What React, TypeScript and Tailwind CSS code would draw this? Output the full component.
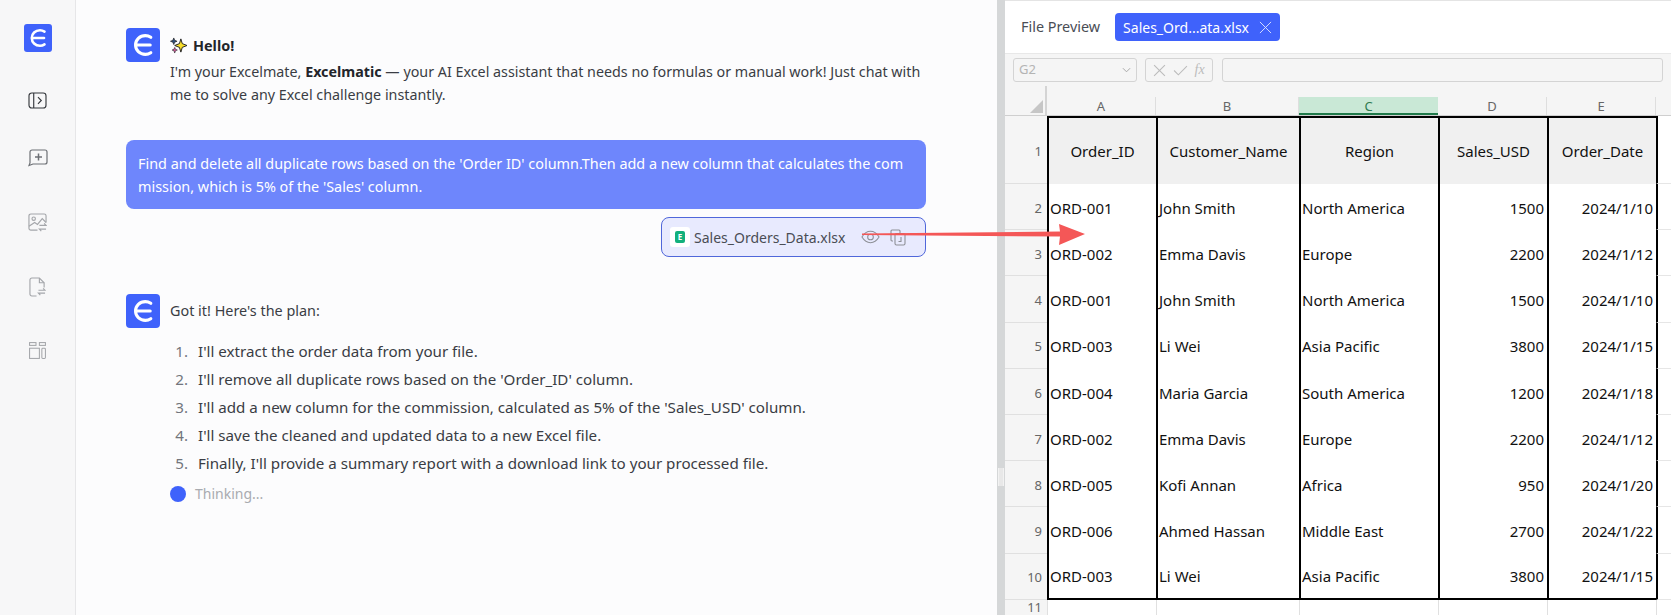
import { Fragment } from "react";

const font = "font-['Noto_Sans','Open_Sans',sans-serif]";

const steps = [
  "I'll extract the order data from your file.",
  "I'll remove all duplicate rows based on the 'Order_ID' column.",
  "I'll add a new column for the commission, calculated as 5% of the 'Sales_USD' column.",
  "I'll save the cleaned and updated data to a new Excel file.",
  "Finally, I'll provide a summary report with a download link to your processed file.",
];

const rows = [
  ["ORD-001", "John Smith", "North America", "1500", "2024/1/10"],
  ["ORD-002", "Emma Davis", "Europe", "2200", "2024/1/12"],
  ["ORD-001", "John Smith", "North America", "1500", "2024/1/10"],
  ["ORD-003", "Li Wei", "Asia Pacific", "3800", "2024/1/15"],
  ["ORD-004", "Maria Garcia", "South America", "1200", "2024/1/18"],
  ["ORD-002", "Emma Davis", "Europe", "2200", "2024/1/12"],
  ["ORD-005", "Kofi Annan", "Africa", "950", "2024/1/20"],
  ["ORD-006", "Ahmed Hassan", "Middle East", "2700", "2024/1/22"],
  ["ORD-003", "Li Wei", "Asia Pacific", "3800", "2024/1/15"],
];

const headers = ["Order_ID", "Customer_Name", "Region", "Sales_USD", "Order_Date"];

function Logo({ size }: { size: "sm" | "lg" }) {
  return (
    <div
      className={
        size === "sm"
          ? "w-7 h-7 rounded-[3px] bg-[#3f62fb] flex items-center justify-center shrink-0"
          : "w-[34px] h-[34px] rounded-[4px] bg-[#3f62fb] flex items-center justify-center shrink-0"
      }
    >
      <svg viewBox="0 0 20 20" className={size === "sm" ? "w-5 h-5" : "w-6 h-6"} fill="none" stroke="#fff" strokeWidth="2.6" strokeLinecap="round">
        <path d="M16.500 3.600C15 2.600 13.600 2.200 12 2.200 7.200 2.200 3.800 5.600 3.800 10s3.400 7.800 8.200 7.800c1.600 0 3-.4 4.500-1.400" />
        <path d="M4.500 10h11.500" />
      </svg>
    </div>
  );
}

function Sidebar() {
  return (
    <aside className="w-[76px] shrink-0 bg-[#f7f7f8] border-r border-[#e6e6e8] flex flex-col items-center pt-6 gap-10">
      <Logo size="sm" />
      <svg viewBox="0 0 20 18" className="w-[19px] h-[17px]" fill="none" stroke="#33363b" strokeWidth="1.2">
        <rect x="1" y="1" width="18" height="16" rx="3" />
        <path d="M6 1v16" />
        <path d="M10.500 5.500l3.500 3.500-3.500 3.500" />
      </svg>
      <svg viewBox="0 0 20 18" className="w-5 h-[18px]" fill="none" stroke="#6d7075" strokeWidth="1.2">
        <path d="M4 1h13a2 2 0 0 1 2 2v10a2 2 0 0 1-2 2H5l-4 1.500L2 14V3a2 2 0 0 1 2-2z" />
        <path d="M10.500 4.500v7M7 8h7" strokeWidth="1.500" />
      </svg>
      <svg viewBox="0 0 20 20" className="w-[19px] h-[19px] mt-[6px]" fill="none" stroke="#a4a6aa" strokeWidth="1.200">
        <path d="M10 18H3a2 2 0 0 1-2-2V3a2 2 0 0 1 2-2h14a2 2 0 0 1 2 2v7" />
        <circle cx="6" cy="6" r="1.800" />
        <path d="M1 14l6-4 3 2 5-6 4 4" />
        <path d="M12 13h7l-2-2M19 17h-7l2 2" />
      </svg>
      <svg viewBox="0 0 18 21" className="w-[17px] h-5 mt-[5px]" fill="none" stroke="#a4a6aa" strokeWidth="1.200">
        <path d="M8 20H3a2 2 0 0 1-2-2V3a2 2 0 0 1 2-2h8l5 5v5" />
        <path d="M11 1v5h5" />
        <path d="M10 14h7l-2-2M17 17h-7l2 2" />
      </svg>
      <svg viewBox="0 0 18 18" className="w-[17px] h-[17px] mt-[5px]" fill="none" stroke="#a4a6aa" strokeWidth="1.100">
        <rect x="0.600" y="0.600" width="6.800" height="3" />
        <rect x="11" y="0.600" width="6.400" height="3" />
        <rect x="0.600" y="6.600" width="10.400" height="10.800" />
        <rect x="13.600" y="6.600" width="3.800" height="10.800" rx="1" />
      </svg>
    </aside>
  );
}

function Chat() {
  return (
    <main className="w-[921px] shrink-0 bg-[#fcfcfd] pt-7 pl-[50px] text-[14.4px] leading-[23px] text-[#3a3d44]">
      <div className="w-[800px]">
        <div className="flex gap-[10px] h-[104px]">
          <Logo size="lg" />
          <div className="pt-[6px]">
            <div className="flex items-center gap-[6px] font-bold text-[#23252a]">
              <svg viewBox="0 0 18 18" className="w-[17px] h-[17px]">
                <path d="M11.500 2l1.500 5 5 2-5 2-1.500 5-1.500-5-5-2 5-2z" fill="#f8de2a" stroke="#1d1d20" strokeWidth="1" />
                <path d="M4 1l1 2.500L7.500 4.500 5 5.500 4 8 3 5.500.5 4.500 3 3.500z" fill="#2e4f7a" stroke="#1d1d20" strokeWidth="0.700" />
                <path d="M5 11l.8 2 2 .8-2 .8-.8 2.400-.8-2.400-2-.8 2-.8z" fill="#d6579a" stroke="#1d1d20" strokeWidth="0.600" />
              </svg>
              <span>Hello!</span>
            </div>
            <p className="mt-[3px] w-[756px] text-[14.3px]">
              I'm your Excelmate, <b className="text-[#23252a]">Excelmatic</b> — your AI Excel assistant that needs no formulas or manual work! Just chat with me to solve any Excel challenge instantly.
            </p>
          </div>
        </div>
        <div className="mt-2 h-[69px] rounded-lg bg-[#6e86fc] text-white px-3 py-3 break-all">
          Find and delete all duplicate rows based on the 'Order ID' column.Then add a new column that calculates the commission, which is 5% of the 'Sales' column.
        </div>
        <div className="flex justify-end mt-2">
          <div className="w-[265px] h-10 rounded-lg border border-[#5067da] bg-[#e8eafe] flex items-center pl-[8px] text-[14px]">
            <span className="w-5 h-5 rounded-[3px] bg-white flex items-center justify-center">
              <span className="w-[10px] h-3 rounded-[2px] bg-[#12b07c] text-white text-[8px] leading-3 font-bold text-center">E</span>
            </span>
            <span className="ml-1 text-[#4a4d55]">Sales_Orders_Data.xlsx</span>
            <svg viewBox="0 0 20 14" className="ml-[16px] w-[19px] h-[14px]" fill="none" stroke="#8d8f96" strokeWidth="1.100">
              <path d="M1 7c2.500-4 5.500-6 9-6s6.500 2 9 6c-2.500 4-5.500 6-9 6s-6.500-2-9-6z" />
              <circle cx="10" cy="7" r="3" />
            </svg>
            <svg viewBox="0 0 16 17" className="ml-[10px] w-4 h-[17px]" fill="none" stroke="#8d8f96" strokeWidth="1.100">
              <path d="M3 12H2a1 1 0 0 1-1-1V2a1 1 0 0 1 1-1h7a1 1 0 0 1 1 1v2" />
              <rect x="5" y="4.500" width="10" height="11.500" rx="1.500" />
              <path d="M11 8v4.500H8.500" />
            </svg>
          </div>
        </div>
        <div className="flex gap-[10px] mt-[37px]">
          <Logo size="lg" />
          <p className="pt-[5px] text-[14.4px]">Got it! Here's the plan:</p>
        </div>
        <ol className="mt-[12px] flex flex-col gap-[5px] text-[15.15px]">
          {steps.map((step, i) => (
            <li key={step} className="flex">
              <span className="w-[72px] pr-[10px] text-right text-[#72757c]">{i + 1}.</span>
              <span>{step}</span>
            </li>
          ))}
        </ol>
        <div className="flex items-center gap-[9px] ml-[44px] mt-[7px] text-[14px] text-[#a9abb0]">
          <span className="w-4 h-4 rounded-full bg-[#3f62fb]" />
          <span>Thinking...</span>
        </div>
      </div>
    </main>
  );
}

function Sheet() {
  const colsCls = "grid grid-cols-[42px_109px_143px_139px_109px_109px_1fr]";
  const lineCls = "border-l-2 border-black";
  return (
    <div className={`flex-1 min-w-0 bg-white flex flex-col overflow-hidden ${font}`}>
      <div className="h-[54px] border-y border-[#e8e8e8] border-t-[#e4e4e4] flex items-center pl-[16px] shrink-0">
        <span className="text-[14.4px] text-[#4a4d55]">File Preview</span>
        <div className="ml-[15px] w-[165px] h-7 rounded-[4px] bg-[#3f62fb] text-white text-[14px] flex items-center pl-2">
          Sales_Ord...ata.xlsx
          <svg viewBox="0 0 14 14" className="ml-[10px] w-[13px] h-[13px]" fill="none" stroke="#dfe5ff" strokeWidth="1">
            <path d="M1 1l12 12M13 1L1 13" />
          </svg>
        </div>
      </div>
      <div className="h-[32px] bg-[#f5f5f5] flex items-center px-2 gap-2 shrink-0">
        <div className="w-[124px] h-6 border border-[#d4d4d4] rounded-[3px] flex items-center justify-between px-[5px] text-[13px] text-[#b4b4b4]">
          G2
          <svg viewBox="0 0 10 6" className="w-[9px] h-[6px]" fill="none" stroke="#a0a0a0" strokeWidth="1"><path d="M1 1l4 4 4-4" /></svg>
        </div>
        <div className="w-[68px] h-6 border border-[#d4d4d4] rounded-[3px] flex items-center justify-around px-1">
          <svg viewBox="0 0 12 12" className="w-[13px] h-[13px]" fill="none" stroke="#bcbcbc" strokeWidth="1"><path d="M1 1l10 10M11 1L1 11" /></svg>
          <svg viewBox="0 0 14 12" className="w-[15px] h-[13px]" fill="none" stroke="#bcbcbc" strokeWidth="1"><path d="M1 6l4 4 8-8" /></svg>
          <span className="text-[14px] leading-4 italic text-[#bcbcbc] font-['Liberation_Serif',serif]">fx</span>
        </div>
        <div className="flex-1 h-6 ml-[1px] border border-[#d4d4d4] rounded-[3px]" />
      </div>
      <div className={`${colsCls} h-[30px] bg-[#f5f5f5] shrink-0 items-end text-[13px] leading-[18px] text-[#666] border-b border-[#cfcfcf]`}>
        <div className="relative h-[29px] border-r-2 border-[#d4d4d4]">
          <span className="absolute right-[2px] bottom-[2px] w-0 h-0 border-l-[13px] border-b-[13px] border-l-transparent border-b-[#c6c6c6]" />
        </div>
        {["A", "B", "C", "D", "E"].map((c) => (
          <div
            key={c}
            className={
              c === "C"
                ? "h-[18px] bg-[#c9e8d6] text-[#2f7a50] text-center border-b-2 border-[#1f7a4a] leading-[19px]"
                : "h-[18px] text-center border-r border-[#dedede] leading-[19px]"
            }
          >
            {c}
          </div>
        ))}
        <div />
      </div>
      <div className={`${colsCls} shrink-0 text-[15px] text-[#111]`}>
        <div className="h-[68px] pt-[4px] bg-[#f5f5f5] border-b border-[#e0e0e0] text-[13px] text-[#666] flex items-center justify-end pr-[5px]">1</div>
        {headers.map((h) => (
          <div key={h} className={`h-[68px] bg-[#f0f0f0] border-t-2 border-black ${lineCls} flex items-center justify-center`}>
            {h}
          </div>
        ))}
        <div className={`h-[68px] ${lineCls} border-b border-b-[#e6e6e6]`} />
        {rows.map((row, i) => (
          <Fragment key={i}>
            <div className="h-[46.2px] pt-[4px] bg-[#f5f5f5] border-b border-[#e0e0e0] text-[13px] text-[#666] flex items-center justify-end pr-[5px]">{i + 2}</div>
            {row.map((cell, j) => (
              <div
                key={j}
                className={
                  (i === 8 ? "border-b-2 border-b-black " : "") +
                  `h-[46.2px] pt-[2px] ${lineCls} flex items-center ` +
                  (j >= 3 ? "justify-end pr-[3px]" : "pl-[1px]")
                }
              >
                {cell}
              </div>
            ))}
            <div className={`h-[46.2px] ${lineCls} border-b border-b-[#e6e6e6]`} />
          </Fragment>
        ))}
        <div className="h-[15px] bg-[#f5f5f5] text-[13px] leading-[15px] text-[#666] text-right pr-[5px]">11</div>
        {[0, 1, 2, 3, 4, 5].map((n) => (
          <div key={n} className="h-[15px] border-l border-[#e0e0e0]" />
        ))}
      </div>
    </div>
  );
}

export default function App() {
  return (
    <div className={`relative h-[615px] w-[1671px] flex overflow-hidden ${font}`}>
      <Sidebar />
      <Chat />
      <div className="w-2 shrink-0 bg-[#d5d7d8] flex flex-col items-center pt-[468px]">
        <span className="w-[6px] h-[18px] border-x border-[#f2f2f2] bg-[#e8e8e8]" />
      </div>
      <Sheet />
      {/* red annotation arrow sits over both panels */}
      <svg viewBox="0 0 225 22" className="absolute left-[861px] top-[223px] w-[225px] h-[22px]">
        <path d="M1 10.500L199 8.500 198 1l26 10-26 11 1-8.500L1 12z" fill="#f45757" />
      </svg>
    </div>
  );
}
